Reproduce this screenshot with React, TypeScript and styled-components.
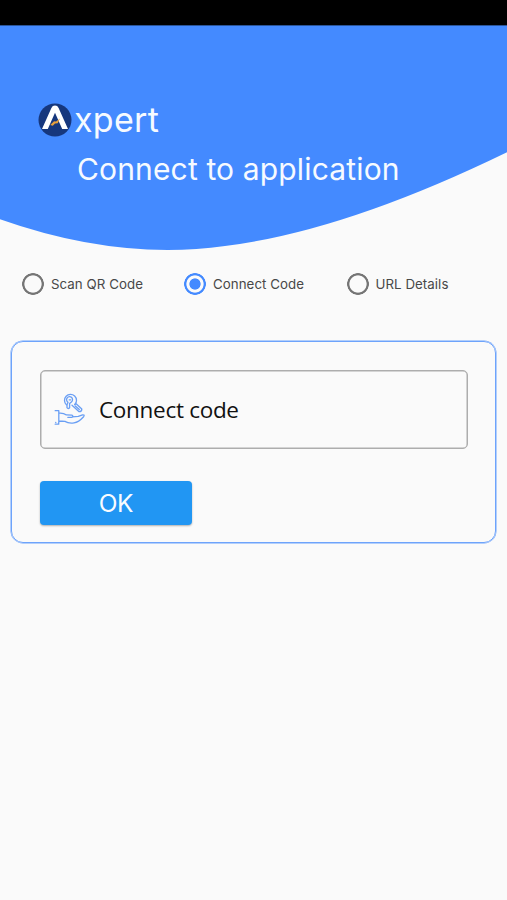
import React, { useState } from "react";
import styled, { createGlobalStyle } from "styled-components";

const GlobalStyle = createGlobalStyle`
  * { box-sizing: border-box; }
  body { margin: 0; background: #fafafa; }
`;

const Screen = styled.main`
  display: flex;
  flex-direction: column;
  width: 507px;
  height: 900px;
  overflow: hidden;
  background: #fafafa;
  font-family: Inter, Roboto, sans-serif;
`;

const StatusBar = styled.div`
  flex: none;
  height: 25px;
  background: #000;
`;

const Hero = styled.header`
  flex: none;
  display: grid;
  height: 226px;
  > * { grid-area: 1 / 1; }
`;

const Wave = styled.svg`
  display: block;
`;

const Heading = styled.div`
  z-index: 1;
  padding: 73px 0 0 38px;
  color: #f6faff;
`;

const Brand = styled.div`
  display: flex;
  align-items: center;
  height: 44px;
  font-size: 34px;
  line-height: 40px;
  letter-spacing: 0.3px;
  white-space: nowrap;
`;

const Logo = styled.svg`
  flex: none;
  margin-right: 2px;
`;

const Title = styled.h1`
  margin: 5px 0 0 39px;
  font-size: 30px;
  font-weight: 400;
  line-height: 45px;
  letter-spacing: 0.15px;
  white-space: nowrap;
`;

const Options = styled.div`
  flex: none;
  display: grid;
  grid-template-columns: 162px 162.5px auto;
  height: 24px;
  margin: 21px 0 0 22px;
`;

const Option = styled.label`
  display: flex;
  align-items: center;
  gap: 7px;
  color: #484848;
  font-size: 13.3px;
  letter-spacing: 0.05px;
  white-space: nowrap;
`;

const Radio = styled.input`
  appearance: none;
  flex: none;
  width: 22px;
  height: 22px;
  margin: 0;
  border: 0;
  border-radius: 50%;
  background: radial-gradient(circle, transparent 8.2px, #757575 9px, #757575 10.6px, transparent 11.3px);
  &:checked {
    background: radial-gradient(circle, #448aff 5.2px, transparent 6px, transparent 8.2px, #448aff 9px, #448aff 10.6px, transparent 11.3px);
  }
`;

const Card = styled.section`
  flex: none;
  height: 202px;
  margin: 45px 11px 0;
  padding: 28px 28px 0;
  border: 1px solid #6da3fb;
  border-radius: 12px;
  box-shadow: 0 0 0 0.5px #6da3fb;
`;

const Field = styled.div`
  display: flex;
  align-items: center;
  height: 79px;
  margin-right: -1px;
  padding-left: 13px;
  border: 1px solid #adadad;
  border-radius: 5px;
  box-shadow: inset 0 0 0 0.5px #adadad;
`;

const FieldIcon = styled.svg`
  flex: none;
  margin-right: 13px;
`;

const CodeInput = styled.input`
  width: 330px;
  height: 34px;
  padding: 0 0 1px;
  border: 0;
  outline: 0;
  background: transparent;
  color: #111;
  font: 22.5px "Open Sans", sans-serif;
  letter-spacing: -0.3px;
  &::placeholder { color: #111; opacity: 1; }
`;

const Submit = styled.button`
  display: block;
  width: 152px;
  height: 44px;
  margin-top: 32px;
  padding: 0;
  border: 0;
  border-radius: 4px;
  background: #2196f3;
  box-shadow: 0 1px 2px rgba(0, 0, 0, 0.3);
  color: #f8fcff;
  font: 24.5px Inter, sans-serif;
  letter-spacing: -0.3px;
`;

const methods = ["Scan QR Code", "Connect Code", "URL Details"];

function BrandMark() {
  return (
    <Logo width="34" height="34" viewBox="0 0 34 34" aria-hidden="true">
      <circle cx="17" cy="17" r="16.5" fill="#16377d" />
      <path d="M4 26 13.4 5q1-2.4 3.6-2.4T20.6 5L30 26h-5.8L17 9.7 9.8 26Z" fill="#fff" />
      <path d="m12.3 22 3.7-3.8 2 .3 4-3-2.3 4.7-2.7.2-2.2 2.3Z" fill="#e9a13b" />
    </Logo>
  );
}

function KeyHandIcon() {
  return (
    <FieldIcon width="32" height="34" viewBox="0 0 32 34" fill="none" stroke="#6a9ff4" strokeWidth="1.3" strokeLinecap="round" strokeLinejoin="round" aria-hidden="true">
      <path d="M12.4 11.7a6 6 0 1 1 8.4-.2" />
      <path d="M14 9.2a3 3 0 1 1 3.4-.2l-1.8 1.5v4.2q-1.5 1.6-2.6 0v-3ZM15.2 6.8h1.5" />
      <path d="m18 12.3 7.1 6.4q2.8-.2 2.7-2.8l-5.4-5-1.7.6M21.3 12.9l4 3.7" />
      <path d="M1.2 17.7h3.6v11.7M1.2 31.2h3.5v-1.8M1.7 29.4h.1M4.8 20.2c3-.2 4.8-.4 7.6 1.7l5.5.2q1.8.8.2 2.2h-4.3M18.5 23.9l5.8-.5 4.3-1.6q2.5-.2 1 1.9-5 5.5-9.6 6.2-5.5.8-9-1.5l-6-.4" />
    </FieldIcon>
  );
}

export default function App() {
  const [method, setMethod] = useState("Connect Code");

  return (
    <>
      <GlobalStyle />
      <Screen>
        <StatusBar />
        <Hero>
          <Wave width="507" height="226" viewBox="0 0 507 226" aria-hidden="true">
            <path d="M0 0H507V1H0Z" fill="#2a5599" />
            <path d="M0 1H507V127.2Q345 206 225 221Q118 236 0 194.3Z" fill="#448aff" />
          </Wave>
          <Heading>
            <Brand><BrandMark />xpert</Brand>
            <Title>Connect to application</Title>
          </Heading>
        </Hero>
        <Options role="radiogroup">
          {methods.map((name) => (
            <Option key={name}>
              <Radio type="radio" name="method" checked={method === name} onChange={() => setMethod(name)} />
              {name}
            </Option>
          ))}
        </Options>
        <Card>
          <Field>
            <KeyHandIcon />
            <CodeInput placeholder="Connect code" />
          </Field>
          <Submit type="button">OK</Submit>
        </Card>
      </Screen>
    </>
  );
}
